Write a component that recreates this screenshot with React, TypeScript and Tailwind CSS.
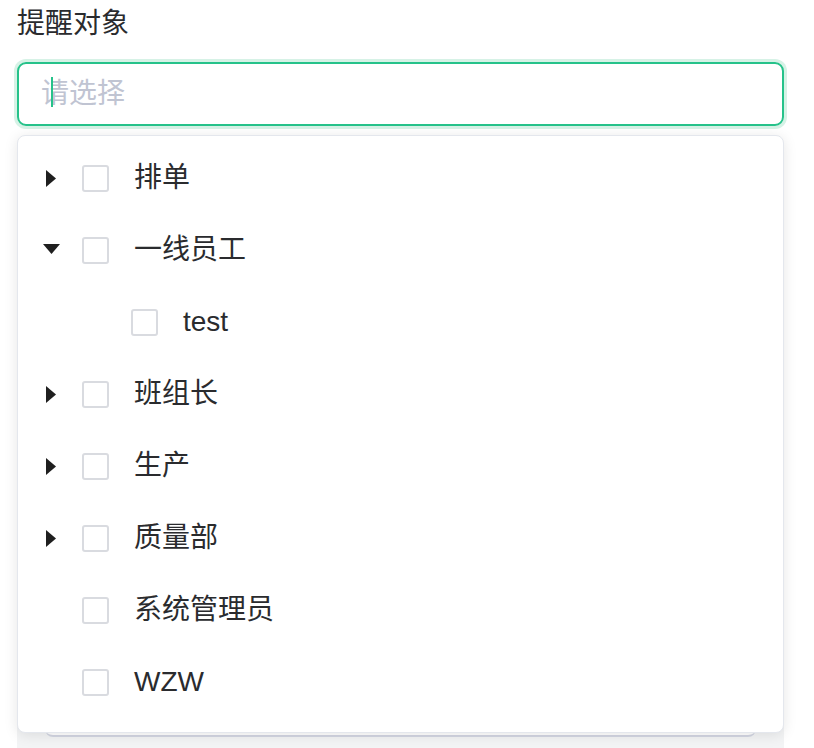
import React from "react";

type Node = { label: string; level: number; arrow?: "right" | "down" };

const nodes: Node[] = [
  { label: "排单", level: 0, arrow: "right" },
  { label: "一线员工", level: 0, arrow: "down" },
  { label: "test", level: 1 },
  { label: "班组长", level: 0, arrow: "right" },
  { label: "生产", level: 0, arrow: "right" },
  { label: "质量部", level: 0, arrow: "right" },
  { label: "系统管理员", level: 0 },
  { label: "WZW", level: 0 },
];

function Arrow({ dir }: { dir?: "right" | "down" }) {
  return (
    <span className="w-[28px] h-[28px] flex items-center justify-center shrink-0">
      {dir === "right" && (
        <svg width="10" height="17" viewBox="0 0 10 17">
          <polygon points="0,0 10,8.5 0,17" fill="#1f1f1f" />
        </svg>
      )}
      {dir === "down" && (
        <svg width="17" height="10" viewBox="0 0 17 10" className="mt-[-2px]">
          <polygon points="0,0 17,0 8.5,10" fill="#1f1f1f" />
        </svg>
      )}
    </span>
  );
}

function TreeRow({ node }: { node: Node }) {
  return (
    <div
      className={
        "h-[72px] flex items-center " + (node.level === 1 ? "pl-[68px]" : "pl-[19px]")
      }
    >
      <Arrow dir={node.arrow} />
      <span className="ml-[17px] w-[27px] h-[27px] shrink-0 rounded-[3px] border-2 border-[#d9dbe0] bg-white" />
      <span className="ml-[25px] text-[28px] leading-none text-[#2a2b2e]">{node.label}</span>
    </div>
  );
}

export default function App() {
  return (
    <div
      className="relative w-[814px] h-[748px] overflow-hidden bg-white"
      style={{ fontFamily: '"Liberation Sans", "Noto Sans CJK SC", sans-serif' }}
    >
      <div className="px-[17px] pt-[4px] w-[801px]">
        <div className="h-[40px] flex items-center text-[28px] text-[#2a2b2e]">提醒对象</div>

        <div className="mt-[18px] h-[64px] rounded-[9px] border-2 border-[#26c28a] shadow-[0_0_0_3px_#d6f2e6] flex items-center pl-[22px]">
          <span className="relative text-[28px] text-[#c0c4d2]">
            <span className="absolute left-[10px] top-[4px] w-[2px] h-[30px] bg-[#26c28a]" />
            请选择
          </span>
        </div>

        {/* content behind the popup */}
        <div className="mt-[20px] h-[640px] bg-[#f3f4f5] px-[28px]">
          <div className="h-[591px] rounded-b-[8px] border-b-2 border-[#d3d6e2] bg-white" />
        </div>
      </div>

      {/* tree select popup */}
      <div className="absolute left-[17px] top-[135px] w-[767px] h-[598px] rounded-[8px] border border-[#e4e7ed] bg-white shadow-[0_2px_14px_rgba(0,0,0,0.1)] pt-[6px]">
        {nodes.map((n) => (
          <TreeRow key={n.label} node={n} />
        ))}
      </div>
    </div>
  );
}
